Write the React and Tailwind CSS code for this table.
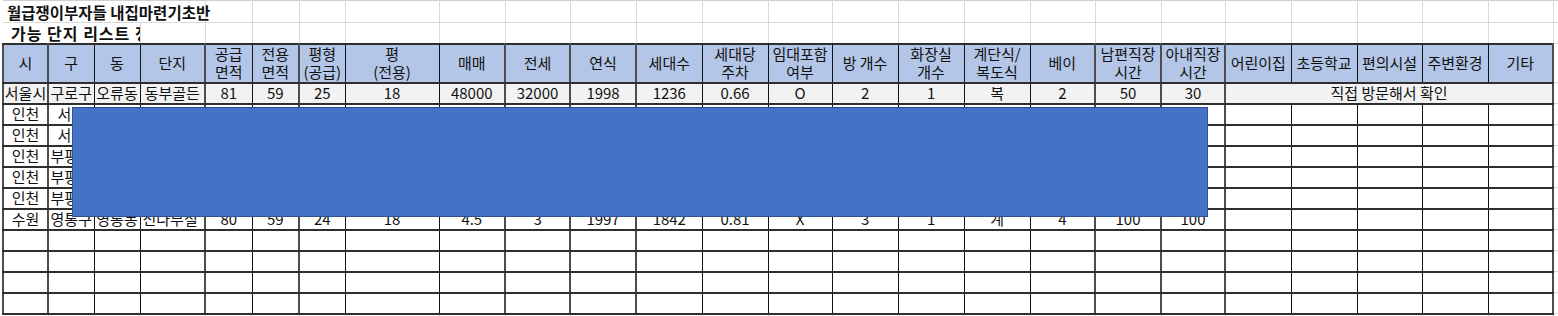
// Spreadsheet-style apartment shortlist (월급쟁이부자들 내집마련기초반)
// Column widths follow the sheet grid; `thick` marks a heavier right border
const columns = [
  { w: 'w-[45px]', thick: true },
  { w: 'w-[46px]', thick: false },
  { w: 'w-[46px]', thick: false },
  { w: 'w-[65px]', thick: true },
  { w: 'w-[47px]', thick: false },
  { w: 'w-[47px]', thick: true },
  { w: 'w-[46px]', thick: false },
  { w: 'w-[94px]', thick: false },
  { w: 'w-[66px]', thick: true },
  { w: 'w-[65px]', thick: true },
  { w: 'w-[66px]', thick: true },
  { w: 'w-[66px]', thick: false },
  { w: 'w-[66px]', thick: false },
  { w: 'w-[64px]', thick: false },
  { w: 'w-[66px]', thick: false },
  { w: 'w-[66px]', thick: false },
  { w: 'w-[66px]', thick: false },
  { w: 'w-[65px]', thick: true },
  { w: 'w-[66px]', thick: true },
  { w: 'w-[64px]', thick: true },
  { w: 'w-[66px]', thick: false },
  { w: 'w-[66px]', thick: false },
  { w: 'w-[65px]', thick: false },
  { w: 'w-[66px]', thick: false },
  { w: 'w-[65px]', thick: true },
];

// Header labels (two entries = two lines in the cell)
const headers = [
  ['시'], ['구'], ['동'], ['단지'], ['공급', '면적'], ['전용', '면적'], ['평형', '(공급)'], ['평', '(전용)'],
  ['매매'], ['전세'], ['연식'], ['세대수'], ['세대당', '주차'], ['임대포함', '여부'], ['방 개수'],
  ['화장실', '개수'], ['계단식/', '복도식'], ['베이'], ['남편직장', '시간'], ['아내직장', '시간'],
  ['어린이집'], ['초등학교'], ['편의시설'], ['주변환경'], ['기타'],
];

// Data rows (first 20 columns); the last five columns are notes
const rows = [
  ['인천', '서구', '청라동', '청라자이', '84', '59', '25', '18', '4.2', '2.8', '2010', '1150', '1.2', 'X', '3', '2', '계', '3', '90', '80'],
  ['인천', '서구', '가정동', '가정우림', '82', '59', '25', '18', '3.9', '2.6', '2008', '870', '1.1', 'X', '3', '2', '계', '3', '90', '80'],
  ['인천', '부평구', '삼산동', '삼산타운', '80', '59', '24', '18', '3.8', '2.5', '2004', '1200', '1.0', 'X', '3', '1', '계', '3', '70', '60'],
  ['인천', '부평구', '부개동', '부개주공', '79', '59', '24', '18', '3.5', '2.3', '1996', '1400', '0.7', 'X', '3', '1', '복', '2', '70', '60'],
  ['인천', '부평구', '산곡동', '산곡현대', '81', '59', '25', '18', '3.6', '2.4', '1999', '980', '0.9', 'X', '3', '1', '계', '3', '70', '60'],
  ['수원', '영통구', '영통동', '신나무실', '80', '59', '24', '18', '4.5', '3', '1997', '1842', '0.81', 'X', '3', '1', '계', '4', '100', '100'],
];

const firstRow = ['서울시', '구로구', '오류동', '동부골든', '81', '59', '25', '18', '48000', '32000', '1998', '1236', '0.66', 'O', '2', '1', '복', '2', '50', '30'];

// Right border for a column of the bordered table
function rightBorder(i) {
  return columns[i].thick ? 'border-r-2 border-r-[#4d4d4d]' : 'border-r border-r-[#111]';
}

export default function App() {
  const cellBase = 'p-0 text-center align-middle whitespace-nowrap overflow-hidden border-y-2 border-y-[#2e2e2e]';
  const light = 'border-r border-r-[#d9d9d9] border-b border-b-[#d9d9d9]';

  return (
    <div className="relative w-[1558px] h-[316px] overflow-hidden bg-white text-[#111] font-['Noto_Sans_CJK_KR','Noto_Sans',sans-serif]">
      <table className="table-fixed border-collapse w-[1556px] ml-[2px] text-[15px] leading-[18px]">
        <colgroup>
          {columns.map((c, i) => (
            <col key={i} className={c.w} />
          ))}
          <col className="w-[6px]" />
        </colgroup>
        <tbody>
          {/* Title row 1 */}
          <tr className="h-[22px]">
            <td colSpan={4} className="p-0 pl-[4px] border-t border-t-[#cfcfcf] border-b border-b-[#d9d9d9] border-r border-r-[#d9d9d9] text-[15.5px] font-bold whitespace-nowrap overflow-visible">
              월급쟁이부자들 내집마련기초반
            </td>
            {columns.slice(4).map((c, i) => (
              <td key={i} className={`p-0 border-t border-t-[#cfcfcf] ${light}`} />
            ))}
            <td className="p-0 border-t border-t-[#cfcfcf] border-b border-b-[#d9d9d9]" />
          </tr>
          {/* Title row 2 */}
          <tr className="h-[21px]">
            <td colSpan={3} className={`p-0 ${light}`}>
              <div className="w-[137px] overflow-hidden whitespace-nowrap pl-[8px] text-[16px] tracking-[1px] font-bold text-left">
                가능 단지 리스트 정리
              </div>
            </td>
            {columns.slice(3).map((c, i) => (
              <td key={i} className={`p-0 ${light}`} />
            ))}
            <td className="p-0 border-b border-b-[#d9d9d9]" />
          </tr>
          {/* Header row */}
          <tr className="h-[39px]">
            {headers.map((h, i) => (
              <td
                key={i}
                className={`${cellBase} bg-[#b4c6e7] ${i === 0 ? 'border-l-2 border-l-[#4d4d4d]' : ''} ${rightBorder(i)}`}
              >
                {h.map((line, j) => (
                  <div key={j}>{line}</div>
                ))}
              </td>
            ))}
            <td className="p-0 border-b border-b-[#d9d9d9]" />
          </tr>
          {/* Seoul row with merged note */}
          <tr className="h-[21px] bg-[#f2f2f2]">
            {firstRow.map((v, i) => (
              <td key={i} className={`${cellBase} ${i === 0 ? 'border-l-2 border-l-[#4d4d4d]' : ''} ${rightBorder(i)}`}>
                {v}
              </td>
            ))}
            <td colSpan={5} className={`${cellBase} ${rightBorder(24)}`}>
              직접 방문해서 확인
            </td>
            <td className="p-0 bg-white border-b border-b-[#d9d9d9]" />
          </tr>
          {/* Other candidate rows */}
          {rows.map((r, ri) => (
            <tr key={ri} className="h-[21px]">
              {columns.map((c, i) => (
                <td
                  key={i}
                  className={`${cellBase} ${i === 3 ? 'text-left pl-[2px]' : ''} ${i === 0 ? 'border-l-2 border-l-[#4d4d4d]' : ''} ${rightBorder(i)}`}
                >
                  {r[i] || ''}
                </td>
              ))}
              <td className="p-0 border-b border-b-[#d9d9d9]" />
            </tr>
          ))}
          {/* Empty rows */}
          {[0, 1, 2, 3].map((ri) => (
            <tr key={`e${ri}`} className="h-[21px]">
              {columns.map((c, i) => (
                <td key={i} className={`${cellBase} ${i === 0 ? 'border-l-2 border-l-[#4d4d4d]' : ''} ${rightBorder(i)}`} />
              ))}
              <td className="p-0 border-b border-b-[#d9d9d9]" />
            </tr>
          ))}
          {/* Row below the table: plain gridlines */}
          <tr className="h-[21px]">
            {columns.map((c, i) => (
              <td key={i} className={`p-0 ${light}`} />
            ))}
            <td className="p-0" />
          </tr>
        </tbody>
      </table>

      {/* Blue rectangle shape lying over the sheet */}
      <div className="absolute left-[72px] top-[107px] w-[1136px] h-[110px] bg-[#4472c4] border border-[#2f528f]" />
    </div>
  );
}
